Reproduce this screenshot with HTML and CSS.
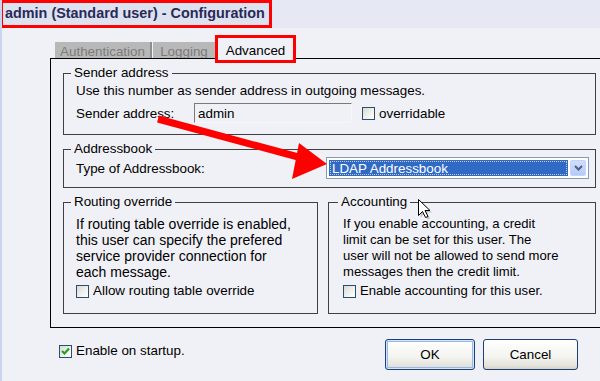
FILE: index.html
```html
<!DOCTYPE html>
<html lang="en">
<head>
  <meta charset="UTF-8">
  <title>admin (Standard user) - Configuration</title>
  <link rel="stylesheet" href="styles.css">
</head>
<body>
  <header class="titlebar">
    <span class="title-box">admin (Standard user) - Configuration</span>
  </header>

  <div class="window">
    <!-- Tabs -->
    <div class="tabs">
      <span class="tab first">Authentication</span>
      <span class="tab">Logging</span>
      <span class="tab active">Advanced</span>
    </div>

    <div class="panel">
      <fieldset class="group sender">
        <legend>Sender address</legend>
        <p class="line">Use this number as sender address in outgoing messages.</p>
        <div class="row">
          <label class="row-label sender-label">Sender address:</label>
          <input class="text-input" type="text" value="admin">
          <span class="check"></span>
          <span class="check-text">overridable</span>
        </div>
      </fieldset>

      <fieldset class="group addressbook">
        <legend>Addressbook</legend>
        <div class="row">
          <label class="row-label book-label">Type of Addressbook:</label>
          <div class="combo">
            <span class="combo-value"><span class="focus">LDAP Addressbook</span></span>
            <span class="combo-btn">
              <svg width="9" height="6" viewBox="0 0 9 6"><path d="M1 1 L4.5 4.5 L8 1" fill="none" stroke="#4d6185" stroke-width="2"/></svg>
            </span>
          </div>
        </div>
      </fieldset>

      <div class="group-row">
        <fieldset class="group routing">
          <legend>Routing override</legend>
          <p class="line">If routing table override is enabled,</p>
          <p class="line">this user can specify the prefered</p>
          <p class="line">service provider connection for</p>
          <p class="line">each message.</p>
          <div class="check-row">
            <span class="check"></span>
            <span class="check-text">Allow routing table override</span>
          </div>
        </fieldset>

        <fieldset class="group accounting">
          <legend>Accounting</legend>
          <p class="line">If you enable accounting, a credit</p>
          <p class="line">limit can be set for this user. The</p>
          <p class="line">user will not be allowed to send more</p>
          <p class="line">messages then the credit limit.</p>
          <div class="check-row">
            <span class="check"></span>
            <span class="check-text">Enable accounting for this user.</span>
          </div>
        </fieldset>
      </div>
    </div>

    <div class="footer">
      <div class="check-row startup">
        <span class="check checked">
          <svg width="11" height="11" viewBox="0 0 11 11"><path d="M2 5 L4.5 7.5 L9 2.5" fill="none" stroke="#21a121" stroke-width="2.2"/></svg>
        </span>
        <span class="check-text">Enable on startup.</span>
      </div>
      <div class="buttons">
        <button class="btn ok">OK</button>
        <button class="btn cancel">Cancel</button>
      </div>
    </div>
  </div>

  <!-- annotation arrow and mouse pointer drawn over the dialog -->
  <svg class="arrow" width="600" height="381" viewBox="0 0 600 381">
    <line x1="158" y1="119" x2="302" y2="158" stroke="#ff0000" stroke-width="7"/>
    <polygon points="299,143 327,164 292,179" fill="#ff0000"/>
  </svg>
  <svg class="pointer" width="16" height="22" viewBox="0 0 16 22">
    <path d="M2.5 2.5 L2.5 18.5 L6.5 14.5 L9.5 20.5 L12 19.5 L9 13.5 L14 13.5 Z" fill="#888" opacity="0.45"/>
    <path d="M0.5 0.5 L0.5 16.5 L4.5 12.5 L7.5 18.5 L10 17.5 L7 11.5 L12 11.5 Z" fill="#fff" stroke="#000" stroke-width="1"/>
  </svg>
</body>
</html>
```

FILE: styles.css
```css
/* General styles */
body {
  margin: 0;
  width: 600px;
  height: 381px;
  overflow: hidden;
  position: relative;
  font-family: "Liberation Sans", Arial, sans-serif;
  font-size: 13.4px;
  color: #000;
  background-color: #f0f1f7;
  border-left: 2px solid #c9d4ee;
  box-sizing: border-box;
}
p {
  margin: 0;
}

/* Title bar */
.titlebar {
  height: 28px;
  margin-left: -2px;
  background-color: #e6e9f4;
}
.title-box {
  display: inline-block;
  box-sizing: border-box;
  width: 272px;
  height: 28px;
  padding-left: 2px;
  border: 3px solid #ff0000;
  background-color: #dde2f1;
  color: #2a2a55;
  font-weight: bold;
  font-size: 14.4px;
  line-height: 21px;
}

/* Tabs */
.window {
  padding-left: 48px;
}
.tabs {
  display: flex;
  align-items: flex-end;
  margin-top: 7px;
  margin-left: 5px;
}
.tab {
  box-sizing: border-box;
  height: 16px;
  line-height: 19px;
  overflow: hidden;
  background-color: #b8b8b8;
  color: #7c7c7c;
  text-align: center;
}
.tab.first {
  width: 97px;
  border-right: 2px solid #8e8e8e;
}
.tab:nth-child(2) {
  width: 62px;
  margin-left: 1px;
}
.tab.active {
  position: relative;
  z-index: 2;
  width: 81px;
  height: 28px;
  margin-bottom: -5px;
  padding-top: 4px;
  border: 3px solid #ff0000;
  background-color: #f0f1f7;
  color: #000;
  line-height: 18px;
}

/* Tab panel */
.panel {
  box-sizing: border-box;
  height: 270px;
  width: 580px;
  padding: 6px 0 0 12px;
  border: 1px solid #000;
  border-right: none;
}
.group {
  box-sizing: border-box;
  width: 533px;
  min-width: 0;
  margin: 0 0 6px 0;
  border: 1px solid #404040;
  padding: 2px 6px 11px 12px;
}
.group legend {
  margin-left: -5px;
  padding: 0 3px;
  line-height: 16px;
}
.line {
  line-height: 16px;
  white-space: nowrap;
}
.row {
  display: flex;
  align-items: center;
  margin-top: 4px;
}
.row-label {
  flex: none;
}
.sender-label {
  width: 118px;
}
.book-label {
  width: 250px;
}
.text-input {
  box-sizing: border-box;
  width: 158px;
  height: 20px;
  margin: 0 10px 0 0;
  padding: 1px 3px 0;
  border: 1px solid #f6f6f8;
  border-top-color: #7a7a7a;
  border-left-color: #7a7a7a;
  background-color: #f0f1f7;
  font: inherit;
  color: #000;
}

/* Checkboxes */
.check {
  display: inline-block;
  box-sizing: border-box;
  width: 13px;
  height: 13px;
  margin-right: 4px;
  border: 1px solid #2c4e6e;
  background: linear-gradient(135deg, #d9d9d3, #f6f6f4 70%, #ffffff);
  flex: none;
}
.check svg {
  display: block;
}
.check-row {
  display: flex;
  align-items: center;
  line-height: 16px;
  margin-top: 3px;
}

/* Addressbook combo */
.addressbook {
  padding-top: 0;
  padding-bottom: 8px;
}
.addressbook .row {
  margin-top: 0;
}
.combo {
  box-sizing: border-box;
  display: flex;
  width: 263px;
  height: 22px;
  padding: 2px;
  border: 1px solid #7f9db9;
  background-color: #fff;
}
.combo-value {
  flex: 1;
  background-color: #316ac5;
  color: #fff;
  padding: 1px;
  margin-right: 2px;
}
.focus {
  display: block;
  height: 100%;
  box-sizing: border-box;
  border: 1px dotted #c9c9c9;
  line-height: 14px;
  padding-left: 1px;
}
.combo-btn {
  width: 16px;
  display: flex;
  align-items: center;
  justify-content: center;
  border-radius: 2px;
  background: linear-gradient(#d2def9, #b6caf5);
  border: 1px solid #c3d3fd;
  box-sizing: border-box;
}

/* Routing / accounting */
.group-row {
  display: flex;
  gap: 10px;
}
.routing,
.accounting {
  margin: 0;
  padding-top: 6px;
  padding-bottom: 14px;
}
.routing {
  width: 255px;
}
.routing .line {
  font-size: 14px;
}
.accounting {
  width: 268px;
  padding-left: 14px;
}
.accounting .line,
.accounting .check-text {
  font-size: 13.1px;
}

/* Footer */
.footer {
  display: flex;
  align-items: flex-start;
  padding: 11px 22px 0 9px;
}
.startup {
  margin-top: 4px;
}
.buttons {
  display: flex;
  gap: 8px;
  margin-left: auto;
}
.btn {
  box-sizing: border-box;
  height: 31px;
  border: 1px solid #1d3f72;
  border-radius: 3px;
  background: linear-gradient(#ffffff, #f3f3ef 60%, #e3e2da 90%, #d6d0c5);
  font: inherit;
  color: #000;
  cursor: pointer;
}
.btn.ok {
  width: 90px;
  box-shadow: inset 0 0 0 1px #cee7ff, inset 0 0 0 2px #98b8ea;
}
.btn.cancel {
  width: 95px;
}

/* Overlays */
.arrow {
  position: absolute;
  top: 0;
  left: -2px;
  pointer-events: none;
}
.pointer {
  position: absolute;
  left: 416px;
  top: 199px;
}
```
